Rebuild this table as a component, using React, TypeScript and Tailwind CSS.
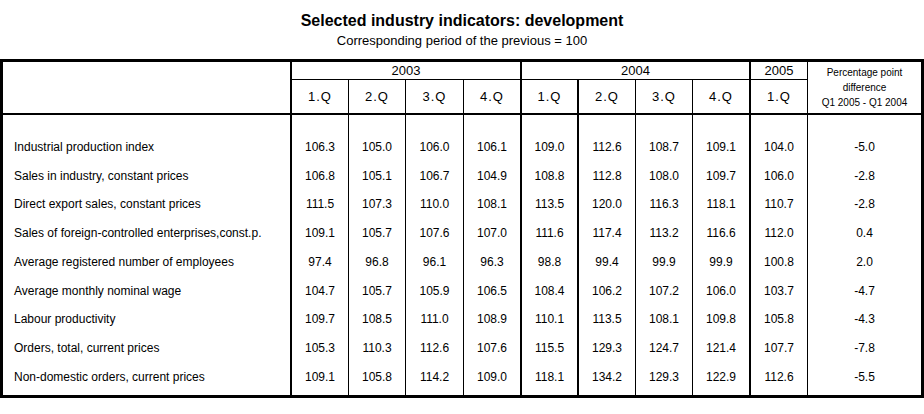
const quarters = ['1.Q', '2.Q', '3.Q', '4.Q', '1.Q', '2.Q', '3.Q', '4.Q', '1.Q'];

// left border of each column, index 0 is the label column
const colBorder = [
  '',
  'border-l-2',
  'border-l',
  'border-l',
  'border-l',
  'border-l-2',
  'border-l-2',
  'border-l',
  'border-l',
  'border-l-2',
  'border-l',
];

const rows: { label: string; values: string[] }[] = [
  { label: 'Industrial production index', values: ['106.3', '105.0', '106.0', '106.1', '109.0', '112.6', '108.7', '109.1', '104.0', '-5.0'] },
  { label: 'Sales in industry, constant prices', values: ['106.8', '105.1', '106.7', '104.9', '108.8', '112.8', '108.0', '109.7', '106.0', '-2.8'] },
  { label: 'Direct export sales, constant prices', values: ['111.5', '107.3', '110.0', '108.1', '113.5', '120.0', '116.3', '118.1', '110.7', '-2.8'] },
  { label: 'Sales of foreign-controlled enterprises,const.p.', values: ['109.1', '105.7', '107.6', '107.0', '111.6', '117.4', '113.2', '116.6', '112.0', '0.4'] },
  { label: 'Average registered number of employees', values: ['97.4', '96.8', '96.1', '96.3', '98.8', '99.4', '99.9', '99.9', '100.8', '2.0'] },
  { label: 'Average monthly nominal wage', values: ['104.7', '105.7', '105.9', '106.5', '108.4', '106.2', '107.2', '106.0', '103.7', '-4.7'] },
  { label: 'Labour productivity', values: ['109.7', '108.5', '111.0', '108.9', '110.1', '113.5', '108.1', '109.8', '105.8', '-4.3'] },
  { label: 'Orders, total, current prices', values: ['105.3', '110.3', '112.6', '107.6', '115.5', '129.3', '124.7', '121.4', '107.7', '-7.8'] },
  { label: 'Non-domestic orders, current prices', values: ['109.1', '105.8', '114.2', '109.0', '118.1', '134.2', '129.3', '122.9', '112.6', '-5.5'] },
];

const gridCols = 'grid grid-cols-[287px_58px_57px_58px_57px_57px_58px_57px_57px_58px_114px]';

export default function App() {
  return (
    <div className="w-[924px] h-[414px] bg-white text-black font-['Liberation_Sans',Arial,sans-serif] overflow-hidden">
      {/* Title */}
      <div className="pt-[11px] text-center">
        <h1 className="text-[16px] leading-[20px] font-bold">Selected industry indicators: development</h1>
        <p className="mt-[2px] text-[13px] leading-[16px]">Corresponding period of the previous = 100</p>
      </div>

      {/* Table */}
      <div className="mt-[10px] border-[3px] border-black">
        {/* Header */}
        <div className={`${gridCols} grid-rows-[18px_35px]`}>
          <div className="row-span-2 border-b-2 border-black" />
          <div className="col-span-4 border-l-2 border-b border-black flex items-center justify-center text-[13px]">2003</div>
          <div className="col-span-4 border-l-2 border-b border-black flex items-center justify-center text-[13px]">2004</div>
          <div className="border-l-2 border-b border-black flex items-center justify-center text-[13px]">2005</div>
          <div className="row-span-2 border-l border-b-2 border-black flex flex-col items-center justify-center text-[10px] leading-[15px]">
            <span>Percentage point</span>
            <span>difference</span>
            <span>Q1 2005 - Q1 2004</span>
          </div>
          {quarters.map((q, i) => (
            <div
              key={i}
              className={`${colBorder[i + 1]} border-b-2 border-black flex items-center justify-center text-[13px] tracking-[1px]`}
            >
              {q}
            </div>
          ))}
        </div>

        {/* Body */}
        <div className={gridCols}>
          {rows.map((row, r) => {
            const first = r === 0;
            const last = r === rows.length - 1;
            const pad = first ? 'h-[46.35px] pt-[17.6px]' : last ? 'h-[32.4px] pb-[3.65px]' : 'h-[28.75px]';
            return [
              <div key={`${r}-l`} className={`${pad} flex items-center pl-[11px] text-[12px] whitespace-nowrap`}>
                {row.label}
              </div>,
              ...row.values.map((v, c) => (
                <div
                  key={`${r}-${c}`}
                  className={`${pad} ${colBorder[c + 1]} border-black flex items-center justify-center text-[12px]`}
                >
                  {v}
                </div>
              )),
            ];
          })}
        </div>
      </div>
    </div>
  );
}
